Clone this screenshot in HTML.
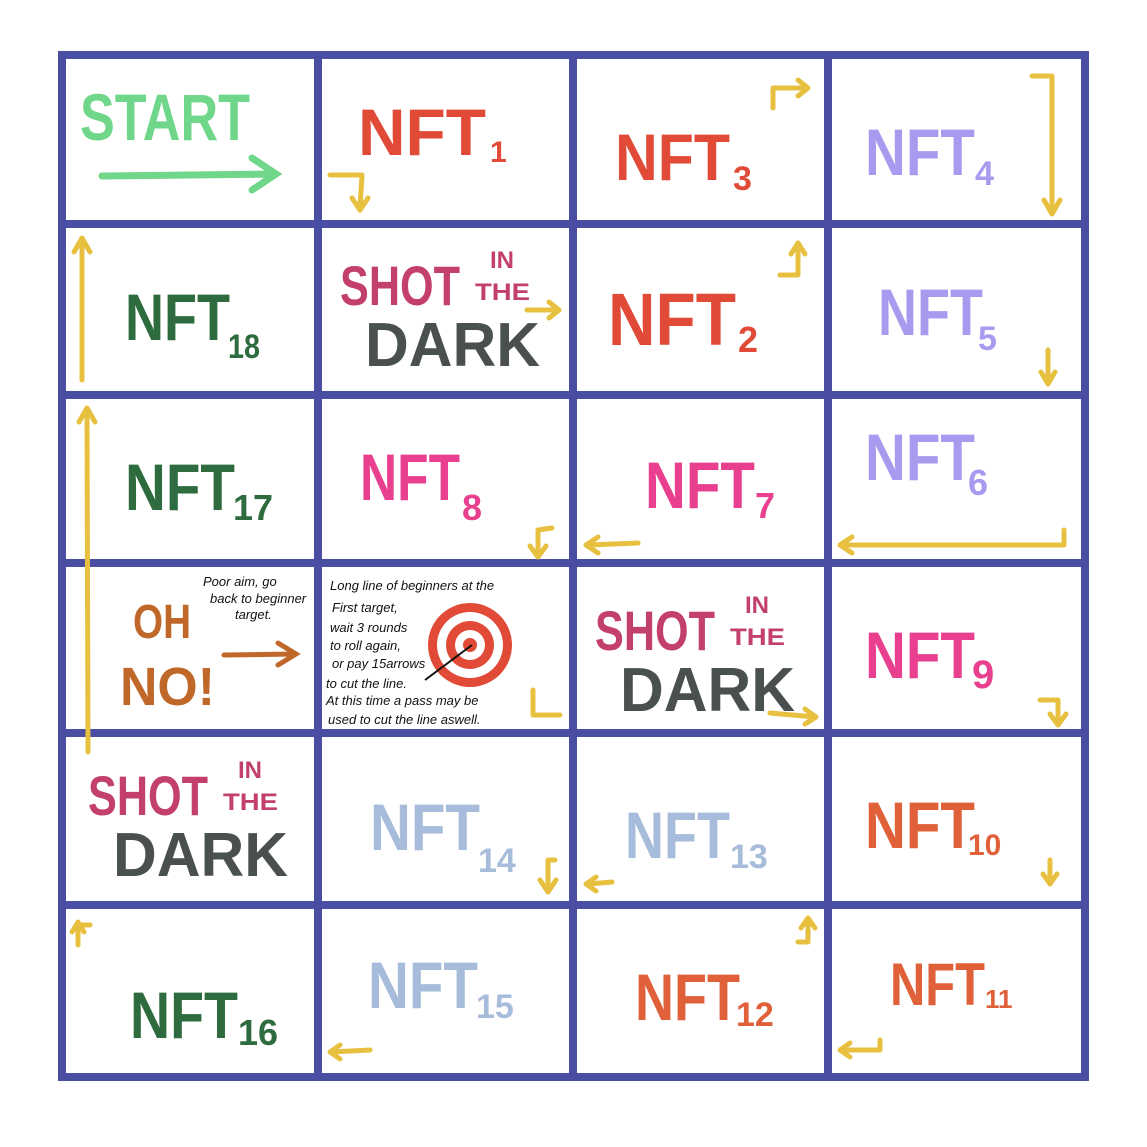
<!DOCTYPE html>
<html><head><meta charset="utf-8"><style>
html,body{margin:0;padding:0;background:#fff;}
svg{display:block}
text{font-family:"Liberation Sans Narrow","Liberation Sans",sans-serif;font-weight:bold;}
.s{font-family:"Liberation Sans",sans-serif;font-weight:normal;fill:#111;font-size:13px;font-style:italic}
</style></head><body>
<svg width="1147" height="1147" viewBox="0 0 1147 1147" xmlns="http://www.w3.org/2000/svg">
<rect width="1147" height="1147" fill="#fff"/>
<g stroke="#4a4ea2" stroke-width="8" stroke-linecap="round" fill="none">
<rect x="62" y="55" width="1023" height="1022"/>
<line x1="318" y1="55" x2="318" y2="1077"/>
<line x1="573" y1="55" x2="573" y2="1077"/>
<line x1="828" y1="55" x2="828" y2="1077"/>
<line x1="62" y1="224" x2="1085" y2="224"/>
<line x1="62" y1="395" x2="1085" y2="395"/>
<line x1="62" y1="563" x2="1085" y2="563"/>
<line x1="62" y1="733" x2="1085" y2="733"/>
<line x1="62" y1="905" x2="1085" y2="905"/>
</g>
<text x="80" y="140" font-size="66" fill="#6fd68a" textLength="170" lengthAdjust="spacingAndGlyphs">START</text>
<g stroke="#6fd68a" stroke-width="7" stroke-linecap="round" fill="none"><path d="M102 176 L275 174 M252 158 L276 174 L252 190"/></g>
<g font-size="66">
<text x="358" y="155" fill="#e04a36" textLength="128" lengthAdjust="spacingAndGlyphs">NFT</text><text x="490" y="162" font-size="30" fill="#e04a36">1</text>
<text x="615" y="180" fill="#e04a36" textLength="115" lengthAdjust="spacingAndGlyphs">NFT</text><text x="733" y="190" font-size="34" fill="#e04a36">3</text>
<text x="865" y="175" fill="#a99af0" textLength="110" lengthAdjust="spacingAndGlyphs">NFT</text><text x="975" y="185" font-size="34" fill="#a99af0">4</text>
<text x="125" y="340" fill="#2e6b3e" textLength="105" lengthAdjust="spacingAndGlyphs">NFT</text><text x="228" y="358" font-size="34" fill="#2e6b3e" textLength="32" lengthAdjust="spacingAndGlyphs">18</text>
<text x="608" y="345" font-size="74" fill="#e04a36" textLength="128" lengthAdjust="spacingAndGlyphs">NFT</text><text x="738" y="352" font-size="36" fill="#e04a36">2</text>
<text x="878" y="335" fill="#a99af0" textLength="105" lengthAdjust="spacingAndGlyphs">NFT</text><text x="978" y="350" font-size="34" fill="#a99af0">5</text>
<text x="125" y="510" fill="#2e6b3e" textLength="110" lengthAdjust="spacingAndGlyphs">NFT</text><text x="233" y="520" font-size="36" fill="#2e6b3e">17</text>
<text x="360" y="500" fill="#e8408e" textLength="100" lengthAdjust="spacingAndGlyphs">NFT</text><text x="462" y="520" font-size="36" fill="#e8408e">8</text>
<text x="645" y="508" fill="#e8408e" textLength="110" lengthAdjust="spacingAndGlyphs">NFT</text><text x="755" y="518" font-size="36" fill="#e8408e">7</text>
<text x="865" y="480" fill="#a99af0" textLength="110" lengthAdjust="spacingAndGlyphs">NFT</text><text x="968" y="495" font-size="36" fill="#a99af0">6</text>
<text x="865" y="678" fill="#e8408e" textLength="110" lengthAdjust="spacingAndGlyphs">NFT</text><text x="972" y="688" font-size="40" fill="#e8408e">9</text>
<text x="370" y="850" fill="#a7bcda" textLength="110" lengthAdjust="spacingAndGlyphs">NFT</text><text x="478" y="872" font-size="34" fill="#a7bcda">14</text>
<text x="625" y="858" fill="#a7bcda" textLength="105" lengthAdjust="spacingAndGlyphs">NFT</text><text x="730" y="868" font-size="34" fill="#a7bcda">13</text>
<text x="865" y="848" fill="#e0603a" textLength="110" lengthAdjust="spacingAndGlyphs">NFT</text><text x="968" y="855" font-size="30" fill="#e0603a">10</text>
<text x="130" y="1038" fill="#2e6b3e" textLength="108" lengthAdjust="spacingAndGlyphs">NFT</text><text x="238" y="1045" font-size="36" fill="#2e6b3e">16</text>
<text x="368" y="1008" fill="#a7bcda" textLength="110" lengthAdjust="spacingAndGlyphs">NFT</text><text x="476" y="1018" font-size="34" fill="#a7bcda">15</text>
<text x="635" y="1020" fill="#e0603a" textLength="105" lengthAdjust="spacingAndGlyphs">NFT</text><text x="736" y="1026" font-size="34" fill="#e0603a">12</text>
<text x="890" y="1005" font-size="60" fill="#e0603a" textLength="95" lengthAdjust="spacingAndGlyphs">NFT</text><text x="985" y="1008" font-size="26" fill="#e0603a">11</text>
</g>
<g id="sd">
<text x="340" y="305" font-size="56" fill="#c2406a" textLength="120" lengthAdjust="spacingAndGlyphs">SHOT</text>
<text x="490" y="268" font-size="24" fill="#c2406a">IN</text>
<text x="475" y="300" font-size="24" fill="#c2406a" textLength="55" lengthAdjust="spacingAndGlyphs">THE</text>
<text x="365" y="366" font-size="62" fill="#4a5050" textLength="175" lengthAdjust="spacingAndGlyphs">DARK</text>
</g>
<use href="#sd" x="255" y="345"/>
<use href="#sd" x="-252" y="510"/>
<text x="133" y="638" font-size="48" fill="#c0682a" textLength="58" lengthAdjust="spacingAndGlyphs">OH</text>
<text x="120" y="705" font-size="54" fill="#c0682a" textLength="95" lengthAdjust="spacingAndGlyphs">NO!</text>
<g stroke="#c0682a" stroke-width="5" stroke-linecap="round" fill="none"><path d="M224 655 L295 654 M278 643 L296 654 L278 665"/></g>
<text class="s" x="203" y="586">Poor aim, go</text>
<text class="s" x="210" y="603" font-size="12">back to beginner</text>
<text class="s" x="235" y="619" font-size="12">target.</text>
<g>
<text class="s" x="330" y="590" font-size="15">Long line of beginners at the</text>
<text class="s" x="332" y="612">First target,</text>
<text class="s" x="330" y="632">wait 3 rounds</text>
<text class="s" x="330" y="650">to roll again,</text>
<text class="s" x="332" y="668">or pay 15arrows</text>
<text class="s" x="326" y="688">to cut the line.</text>
<text class="s" x="326" y="705">At this time a pass may be</text>
<text class="s" x="328" y="724">used to cut the line aswell.</text>
</g>
<g><circle cx="470" cy="645" r="42" fill="#e04a36"/><circle cx="470" cy="645" r="33" fill="#fff"/><circle cx="470" cy="645" r="24" fill="#e04a36"/><circle cx="470" cy="645" r="15" fill="#fff"/><circle cx="470" cy="645" r="7" fill="#e04a36"/>
<path d="M425 680 L472 645" stroke="#111" stroke-width="2"/></g>
<g stroke="#e8c040" stroke-width="5" stroke-linecap="round" stroke-linejoin="round" fill="none">
<path d="M82 380 L82 240 M74 252 L82 238 L90 252"/>
<path d="M88 752 L87 410 M79 422 L87 408 M95 422 L87 408"/>
<path d="M1032 76 L1052 76 L1052 212 M1044 200 L1052 214 L1060 200"/>
<path d="M773 108 L773 88 L806 88 M798 80 L808 88 L798 96"/>
<path d="M330 175 L362 175 L360 208 M352 198 L360 210 L368 198"/>
<path d="M527 310 L558 310 M549 302 L559 310 L549 318"/>
<path d="M780 275 L798 275 L798 245 M791 254 L798 243 L805 254"/>
<path d="M1048 350 L1048 382 M1041 372 L1048 384 L1055 372"/>
<path d="M1064 530 L1064 545 L840 545 M852 537 L840 545 L852 553"/>
<path d="M638 543 L588 545 M598 537 L586 545 L598 553"/>
<path d="M552 528 L538 530 L538 556 M530 546 L538 557 L546 546"/>
<path d="M533 690 L533 715 L560 715"/>
<path d="M770 713 L815 717 M805 709 L816 717 L805 724"/>
<path d="M1040 700 L1058 700 L1058 722 M1050 714 L1058 725 L1066 714"/>
<path d="M1050 860 L1050 882 M1043 874 L1050 884 L1057 874"/>
<path d="M555 860 L548 860 L548 890 M540 880 L548 892 L556 880"/>
<path d="M612 882 L588 884 M596 877 L586 884 L596 891"/>
<path d="M78 945 L78 925 L90 925 M72 932 L78 922 L84 932"/>
<path d="M798 942 L808 942 L808 920 M801 928 L808 918 L815 928"/>
<path d="M880 1040 L880 1050 L842 1050 M850 1043 L840 1050 L850 1057"/>
<path d="M370 1050 L332 1052 M340 1045 L330 1052 L340 1059"/>
</g>
</svg>
</body></html>
